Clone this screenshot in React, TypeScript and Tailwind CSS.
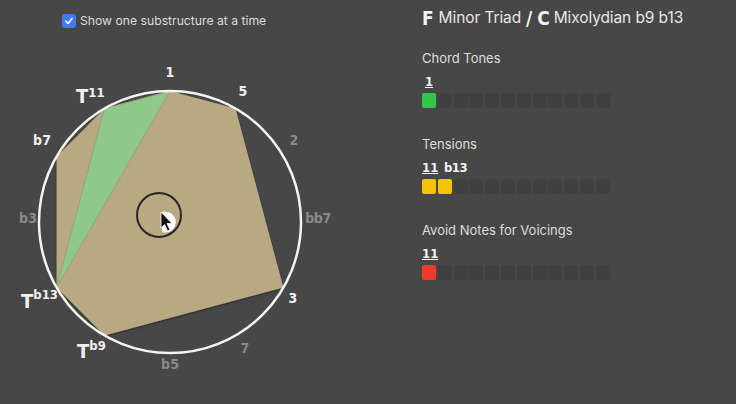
import React from "react";

const HAND = '"DejaVu Sans Condensed", "DejaVu Sans", sans-serif';

function Squares({ filled }: { filled: string[] }) {
  const cells = Array.from({ length: 12 }, (_, i) => filled[i]);
  return (
    <div className="flex gap-[1.8px]">
      {cells.map((c, i) => (
        <div
          key={i}
          className={
            "w-[14px] h-[15px] rounded-[2px] " +
            (c === "green"
              ? "bg-[#33c748]"
              : c === "yellow"
              ? "bg-[#f5c400]"
              : c === "red"
              ? "bg-[#ef3b2d]"
              : "bg-[#404040]")
          }
        />
      ))}
    </div>
  );
}

function Section({
  title,
  labels,
  filled,
  first,
}: {
  title: string;
  labels: React.ReactNode;
  filled: string[];
  first?: boolean;
}) {
  return (
    <div className={"flex flex-col " + (first ? "mt-[20px]" : "mt-[28px]")}>
      <div className="h-[16px] leading-[16px] text-[13px] text-[#dedede]">{title}</div>
      <div
        className="mt-[9px] h-[13px] leading-[13px] text-[13px] font-bold text-[#f2f2f2] flex"
        style={{ fontFamily: HAND }}
      >
        {labels}
      </div>
      <div className="mt-[5px]">
        <Squares filled={filled} />
      </div>
    </div>
  );
}

function Diagram() {
  const cx = 170;
  const cy = 222;
  const r = 131;
  const pt = (deg: number) => {
    const a = ((deg - 90) * Math.PI) / 180;
    return [cx + r * Math.cos(a), cy + r * Math.sin(a)];
  };
  const poly = [0, 30, 120, 210, 240, 300, 330].map(pt);
  const tri = [0, 330, 240].map(pt);
  const toStr = (p: number[][]) => p.map((q) => q.map((v) => v.toFixed(1)).join(",")).join(" ");
  const white = "#f0f0f0";
  const gray = "#8a8a8a";
  return (
    <svg width={400} height={364} viewBox="0 40 400 364" className="block">
      <defs>
        <filter id="sh" x="-10%" y="-10%" width="120%" height="120%">
          <feDropShadow dx="0" dy="1" stdDeviation="1.2" floodColor="#000" floodOpacity="0.45" />
        </filter>
      </defs>
      <polygon points={toStr(poly)} fill="#b9a983" filter="url(#sh)" />
      <polygon points={toStr(tri)} fill="#8ec88a" stroke="#9c9a70" strokeWidth={0.8} />
      <circle cx={cx} cy={cy} r={r} fill="none" stroke="#f4f4f4" strokeWidth={2.5} />
      <circle cx={159} cy={215} r={22} fill="none" stroke="#262626" strokeWidth={2} />
      <path d="M162 212 A10.5 10.5 0 1 1 162 232 Z" fill="#ffffff" />
      <path
        d="M161 212 L161 228 L164.5 224.5 L167.5 231 L170 229.8 L167 223.5 L172 223.5 Z"
        fill="#111"
        stroke="#fff"
        strokeWidth={0.8}
      />
      <g fontFamily={HAND} fontWeight="bold" textAnchor="middle" dominantBaseline="central">
        <text x={170} y={72} fontSize={14} fill={white}>1</text>
        <text x={243} y={91} fontSize={14} fill={white}>5</text>
        <text x={294} y={140} fontSize={14} fill={gray}>2</text>
        <text x={318} y={218} fontSize={14} fill={gray} letterSpacing={-0.5}>bb7</text>
        <text x={293} y={298} fontSize={14} fill={white}>3</text>
        <text x={245} y={348} fontSize={14} fill={gray}>7</text>
        <text x={170} y={364} fontSize={14} fill={gray}>b5</text>
        <text x={28} y={218} fontSize={14} fill={gray}>b3</text>
        <text x={42} y={140} fontSize={14} fill={white}>b7</text>
      </g>
      <g fontFamily={HAND} fontWeight="bold" fill={white} dominantBaseline="central">
        <text x={76} y={96} fontSize={20}>
          T<tspan fontSize={13} dy={-4}>11</tspan>
        </text>
        <text x={21} y={301} fontSize={20}>
          T<tspan fontSize={13} dy={-7}>b13</tspan>
        </text>
        <text x={77} y={351} fontSize={20}>
          T<tspan fontSize={13} dy={-6}>b9</tspan>
        </text>
      </g>
    </svg>
  );
}

export default function App() {
  return (
    <div
      className="w-[736px] h-[404px] bg-[#474747] flex overflow-hidden"
      style={{ fontFamily: 'Inter, "Liberation Sans", sans-serif' }}
    >
      <div className="w-[400px] flex flex-col">
        <div className="h-[40px] pl-[62px] pt-[14px] flex items-start">
          <div className="w-[14px] h-[14px] rounded-[3px] bg-[#3d7cf5] flex items-center justify-center">
            <svg width="10" height="10" viewBox="0 0 10 10">
              <path d="M2 5.2 L4.2 7.4 L8 2.6" fill="none" stroke="#fff" strokeWidth="1.6" strokeLinecap="round" strokeLinejoin="round" />
            </svg>
          </div>
          <span className="ml-[4px] text-[12.2px] leading-[14px] text-[#dcdcdc]">Show one substructure at a time</span>
        </div>
        <Diagram />
      </div>
      <div className="flex flex-col pl-[22px] pt-[6px]">
        <div className="h-[24px] flex items-center text-[15.5px] tracking-[-0.1px] text-[#e6e6e6]">
          <span className="font-bold text-[19px] text-[#f2f2f2]" style={{ fontFamily: HAND }}>F</span>
          <span className="ml-[5px]">Minor Triad</span>
          <span className="ml-[5px] font-bold text-[19px] text-[#f2f2f2]" style={{ fontFamily: HAND }}>/</span>
          <span className="ml-[5px] font-bold text-[19px] text-[#f2f2f2]" style={{ fontFamily: HAND }}>C</span>
          <span className="ml-[4px]">Mixolydian b9 b13</span>
        </div>
        <Section
          first
          title="Chord Tones"
          filled={["green"]}
          labels={<span className="w-[14px] text-center underline">1</span>}
        />
        <Section
          title="Tensions"
          filled={["yellow", "yellow"]}
          labels={
            <>
              <span className="w-[16px] text-center underline">11</span>
              <span className="ml-[6px] tracking-[-0.5px]">b13</span>
            </>
          }
        />
        <Section
          title="Avoid Notes for Voicings"
          filled={["red"]}
          labels={<span className="w-[16px] text-center underline">11</span>}
        />
      </div>
    </div>
  );
}
